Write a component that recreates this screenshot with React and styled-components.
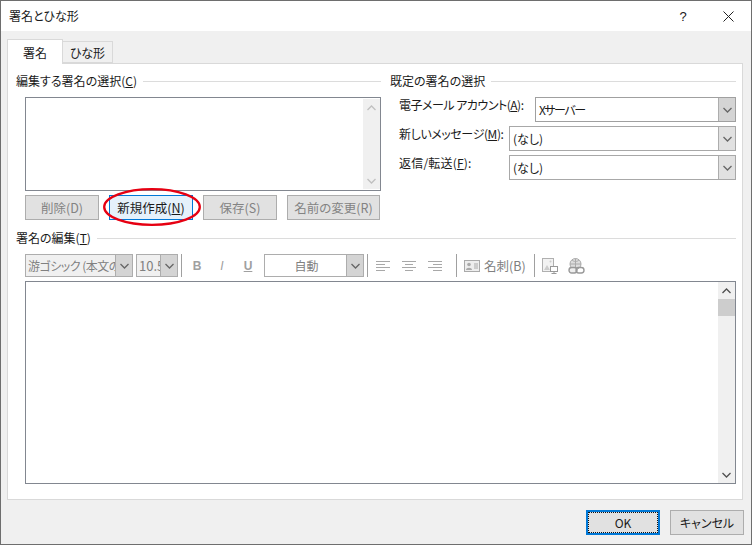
import React from "react";
import styled, { createGlobalStyle } from "styled-components";

const Global = createGlobalStyle`
  html, body { margin: 0; padding: 0; background: #fff; }
  * { box-sizing: border-box; }
  #root { font-family: "Noto Sans CJK JP", "Liberation Sans", sans-serif; font-size: 12px; color: #1a1a1a; font-feature-settings: "palt"; }
`;
const Win = styled.div`
  position: relative; width: 752px; height: 545px; display: flex; flex-direction: column;
  border: 1px solid #6e6e6e; background: #f0f0f0; overflow: hidden;
`;
const TitleBar = styled.div`
  height: 30px; background: #fff; display: flex; align-items: center; padding-left: 8px; flex: none;
`;
const Title = styled.div`flex: 1; font-size: 12px; line-height: 14px; margin-top: 0;`;
const Help = styled.div`width: 46px; text-align: center; font-size: 13px; font-family: "Liberation Sans", sans-serif; padding-left: 2px;`;
const Close = styled.div`width: 46px; height: 30px; display: flex; align-items: center; justify-content: center;`;
const Body = styled.div`flex: 1; padding: 8px 7px 0 6px; display: flex; flex-direction: column;`;
const Tabs = styled.div`display: flex; align-items: flex-end; height: 24px; flex: none; position: relative; z-index: 1;`;
const Tab = styled.div`
  height: ${p => (p.$on ? 25 : 22)}px; width: ${p => (p.$on ? 56 : 51)}px; background: ${p => (p.$on ? "#fff" : "#f0f0f0")};
  border: 1px solid #d9d9d9; border-bottom: ${p => (p.$on ? "0" : "1px solid #d9d9d9")};
  ${p => (p.$on ? "margin-bottom:-1px;" : "margin-left:-1px;")}
  display: flex; align-items: center; justify-content: center; font-size: 12px;
`;
const Panel = styled.div`
  width: 736px; height: 437px; background: #fff; border: 1px solid #d9d9d9; padding: 8px 6px 0 8px; flex: none;
`;
const Top = styled.div`display: grid; grid-template-columns: 365px 346px; column-gap: 9px; height: 157px;`;
const Col = styled.div`display: flex; flex-direction: column; min-width: 0;`;
const Heading = styled.div`
  display: flex; align-items: center; gap: 6px; height: 18px; font-size: 12px; line-height: 18px; white-space: nowrap;
  &::after { content: ""; flex: 1; height: 1px; background: #dcdcdc; }
  u { text-underline-offset: 1px; }
`;
const ListBox = styled.div`
  margin: 7px 0 4px 9px; height: 94px; border: 1px solid #828790; display: flex; justify-content: flex-end; padding: 1px 0; background: #fff;
`;
const VScroll = styled.div`
  width: 17px; background: #f0f0f0; display: flex; flex-direction: column; justify-content: space-between; align-items: center; height: 100%;
`;
const ScrollEnd = styled.div`width: 100%; height: 17px; display: flex; align-items: center; justify-content: center; flex: none;`;
const ScrollThumb = styled.div`width: 100%; height: 17px; background: #cdcdcd; flex: none;`;
const ScrollTrack = styled.div`flex: 1;`;
const Btns = styled.div`display: flex; gap: 10px; margin-left: 9px;`;
const Btn = styled.div`
  width: ${p => p.$w}px; height: 25px; background: ${p => (p.$hot ? "#e5f1fb" : "#e1e1e1")}; border: 1px solid ${p => (p.$hot ? "#0078d7" : "#adadad")};
  color: ${p => (p.$hot ? "#1a1a1a" : "#838383")}; display: flex; align-items: center; justify-content: center; font-size: 12.5px; white-space: nowrap;
`;
const Rows = styled.div`display: flex; flex-direction: column; gap: 4px; margin-top: 7px;`;
const Row = styled.div`display: flex; align-items: flex-start; height: 25px; padding-left: 9px;`;
const RowLabel = styled.div`flex: 1; min-width: 0; line-height: 16px; white-space: nowrap; font-size: 12px; letter-spacing: ${p => p.$ls || 0}px;`;
const Select = styled.div`
  width: ${p => p.$w}px; height: 25px; flex: none; border: 1px solid ${p => (p.$dark ? "#a0a0a0" : "#a8a8a8")}; display: flex; background: #fff; align-items: stretch;
`;
const SelectText = styled.div`flex: 1; padding-left: 3px; display: flex; align-items: center; font-size: 12px; overflow: hidden; white-space: nowrap; letter-spacing: ${p => p.$ls || 0}px;`;
const Arrow = styled.div`
  width: 17px; flex: none; background: ${p => (p.$dark ? "#d4d4d4" : "#e1e1e1")}; border-left: 1px solid #adadad; display: flex; align-items: center; justify-content: center;
`;
const Toolbar = styled.div`display: flex; align-items: center; height: 23px; margin: 7px 0 4px 9px;`;
const FontCombo = styled.div`
  width: ${p => p.$w}px; height: 23px; flex: none; margin-left: ${p => p.$ml || 0}px; display: flex; border: 1px solid #adadad; background: ${p => p.$bg || "#f0f0f0"};
`;
const ComboText = styled.div`
  flex: 1; min-width: 0; overflow: hidden; white-space: nowrap; color: #808080; font-size: ${p => p.$fs || 12}px; display: flex; align-items: center; padding-left: 2px;
  letter-spacing: ${p => p.$ls || 0}px;
  justify-content: ${p => (p.$center ? "center" : "flex-start")};
`;
const Sep = styled.div`width: 1px; height: 23px; background: #a0a0a0; flex: none; margin-left: ${p => p.$ml}px;`;
const Fmt = styled.div`
  width: 10px; flex: none; margin-left: ${p => p.$ml}px; text-align: center; color: #a0a0a0; font: ${p => p.$f || "bold"} 12px "Liberation Sans", sans-serif; text-decoration: ${p => (p.$u ? "underline" : "none")};
`;
const Ico = styled.svg`flex: none; margin-left: ${p => p.$ml}px; display: block;`;
const CardText = styled.span`margin-left: 4px; width: 42px; color: #808080; font-size: 12.5px; white-space: nowrap; flex: none;`;
const Editor = styled.div`
  margin-left: 9px; height: 203px; border: 1px solid #828790; display: flex; justify-content: flex-end; padding: 0; background: #fff;
`;
const Footer = styled.div`display: flex; justify-content: flex-end; gap: 10px; margin-top: 10px;`;
const DlgBtn = styled.div`
  position: relative; width: 74px; height: 25px; display: flex; align-items: center; justify-content: center; background: #e1e1e1;
  border: ${p => (p.$def ? "2px solid #0078d7" : "1px solid #adadad")}; font-size: 12px;
  ${p => p.$def && `&::after { content: ""; position: absolute; inset: 0; border: 1px dotted #111; }`}
`;
const Ring = styled.svg`position: absolute; left: 102px; top: 187px; pointer-events: none;`;

const Chev = ({ up, c = "#555", w = 9 }) => (
  <svg width={w} height="6" viewBox="0 0 9 6">
    <path d={up ? "M0.5 5 L4.5 1 L8.5 5" : "M0.5 1 L4.5 5 L8.5 1"} fill="none" stroke={c} strokeWidth="1.3" />
  </svg>
);
const ArrowBox = ({ dark }) => <Arrow $dark={dark}><Chev c="#666" /></Arrow>;
const AlignIcon = ({ ml, mode }) => {
  const rows = mode === "l" ? [[0, 14], [0, 9], [0, 14], [0, 9]] : mode === "c" ? [[0, 14], [3, 11], [0, 14], [3, 11]] : [[0, 14], [5, 14], [0, 14], [5, 14]];
  return (
    <Ico $ml={ml} width="14" height="11" viewBox="0 0 14 11">
      {rows.map(([a, b], i) => <rect key={i} x={a} y={i * 3 + 1} width={b - a} height="1" fill="#a8a8a8" />)}
    </Ico>
  );
};

export default function App() {
  return (
    <>
      <Global />
      <Win>
        <TitleBar>
          <Title>署名とひな形</Title>
          <Help>?</Help>
          <Close>
            <svg width="11" height="11" viewBox="0 0 11 11"><path d="M0.5 0.5 L10.5 10.5 M10.5 0.5 L0.5 10.5" stroke="#222" strokeWidth="1" fill="none" /></svg>
          </Close>
        </TitleBar>
        <Body>
          <Tabs>
            <Tab $on>署名</Tab>
            <Tab>ひな形</Tab>
          </Tabs>
          <Panel>
            <Top>
              <Col>
                <Heading><span>編集する署名の選択(<u>C</u>)</span></Heading>
                <ListBox>
                  <VScroll>
                    <ScrollEnd><Chev up c="#c0c0c0" /></ScrollEnd>
                    <ScrollEnd><Chev c="#c0c0c0" /></ScrollEnd>
                  </VScroll>
                </ListBox>
                <Btns>
                  <Btn $w={74}>削除(D)</Btn>
                  <Btn $w={84} $hot>新規作成(<u>N</u>)</Btn>
                  <Btn $w={74}>保存(S)</Btn>
                  <Btn $w={93}>名前の変更(R)</Btn>
                </Btns>
              </Col>
              <Col>
                <Heading><span>既定の署名の選択</span></Heading>
                <Rows>
                  <Row>
                    <RowLabel $ls={-0.5}>電子メール アカウント(<u>A</u>):</RowLabel>
                    <Select $w={201} $dark><SelectText $ls={-1.5}>Xサーバー</SelectText><ArrowBox dark /></Select>
                  </Row>
                  <Row>
                    <RowLabel $ls={-0.4}>新しいメッセージ(<u>M</u>):</RowLabel>
                    <Select $w={227}><SelectText>(なし)</SelectText><ArrowBox /></Select>
                  </Row>
                  <Row>
                    <RowLabel $ls={0.2}>返信/転送(<u>F</u>):</RowLabel>
                    <Select $w={227}><SelectText>(なし)</SelectText><ArrowBox /></Select>
                  </Row>
                </Rows>
              </Col>
            </Top>
            <Heading><span>署名の編集(<u>T</u>)</span></Heading>
            <Toolbar>
              <FontCombo $w={108}><ComboText $ls={-0.5}>游ゴシック (本文の</ComboText><ArrowBox dark /></FontCombo>
              <FontCombo $w={42} $ml={3}><ComboText $fs={13}>10.5</ComboText><ArrowBox dark /></FontCombo>
              <Sep $ml={3} />
              <Fmt $ml={10}>B</Fmt>
              <Fmt $ml={15} $f="italic">I</Fmt>
              <Fmt $ml={16} $u $f="bold">U</Fmt>
              <FontCombo $w={100} $ml={11} $bg="#fff"><ComboText $center>自動</ComboText><ArrowBox dark /></FontCombo>
              <Sep $ml={3} />
              <AlignIcon ml={8} mode="l" />
              <AlignIcon ml={12} mode="c" />
              <AlignIcon ml={12} mode="r" />
              <Sep $ml={14} />
              <Ico $ml={7} width="16" height="12" viewBox="0 0 16 12">
                <rect x="0.5" y="0.5" width="15" height="11" fill="#eee" stroke="#aaa" />
                <circle cx="5" cy="4.5" r="1.8" fill="#aaa" /><path d="M2 10 C2 7 8 7 8 10 Z" fill="#aaa" />
                <path d="M10 4 H14 M10 6 H14 M10 8 H14" stroke="#aaa" />
              </Ico>
              <CardText>名刺(B)</CardText>
              <Sep $ml={8} />
              <Ico $ml={7} width="16" height="16" viewBox="0 0 16 16">
                <rect x="0.5" y="0.5" width="11" height="13" fill="#f2f2f2" stroke="#b0b0b0" />
                <path d="M2 12 L5 7 L8 12 Z" fill="#ccc" /><circle cx="8.5" cy="3.5" r="1" fill="#ccc" />
                <rect x="8.5" y="8.5" width="7" height="5" fill="#fff" stroke="#999" /><path d="M12 13.5 V15.5 M9.5 15.5 H14.5" stroke="#999" />
              </Ico>
              <Ico $ml={10} width="17" height="16" viewBox="0 0 17 16">
                <circle cx="7.5" cy="6" r="5.5" fill="#ddd" stroke="#aaa" />
                <path d="M2 6 H13 M7.5 0.5 V11 M4 2 C6 4 9 4 11 2" stroke="#aaa" fill="none" />
                <rect x="1" y="9.5" width="8" height="5.5" rx="2.7" fill="#eee" stroke="#999" strokeWidth="1.4" />
                <rect x="8" y="9.5" width="8" height="5.5" rx="2.7" fill="none" stroke="#999" strokeWidth="1.4" />
              </Ico>
            </Toolbar>
            <Editor>
              <VScroll>
                <ScrollEnd><Chev up c="#505050" /></ScrollEnd>
                <ScrollThumb />
                <ScrollTrack />
                <ScrollEnd><Chev c="#505050" /></ScrollEnd>
              </VScroll>
            </Editor>
          </Panel>
          <Footer>
            <DlgBtn $def>OK</DlgBtn>
            <DlgBtn>キャンセル</DlgBtn>
          </Footer>
        </Body>
        <Ring width="100" height="40" viewBox="0 0 100 40">
          <ellipse cx="49" cy="19" ry="17.8" rx="47.8" fill="none" stroke="#e60012" strokeWidth="2.3" />
        </Ring>
      </Win>
    </>
  );
}
